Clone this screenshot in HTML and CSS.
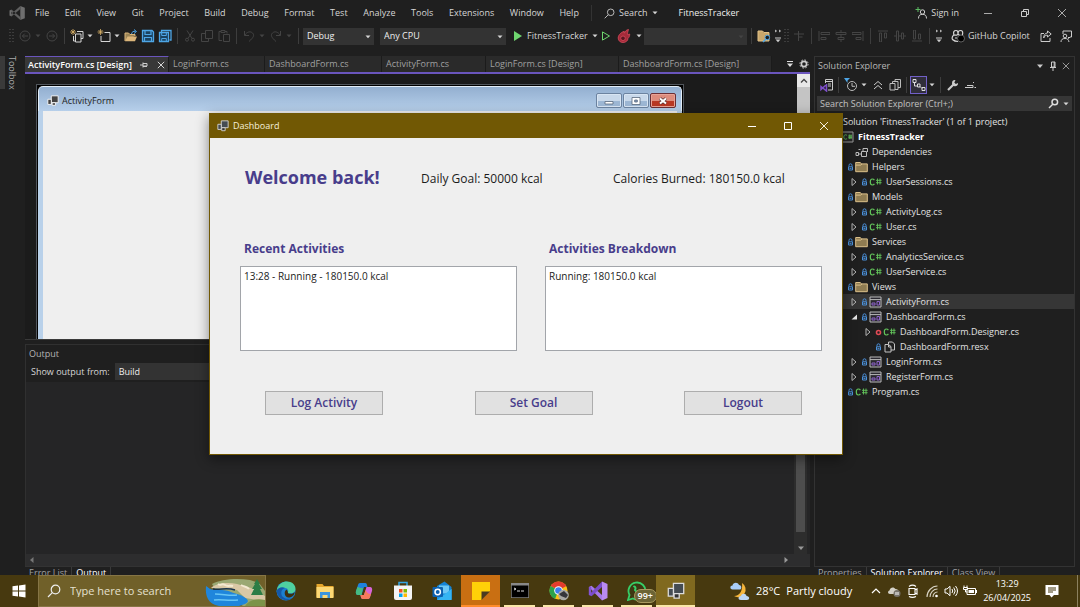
FILE: index.html
```html
<!DOCTYPE html>
<html lang="en">
<head>
<meta charset="utf-8">
<meta name="viewport" content="width=device-width, initial-scale=1">
<title>FitnessTracker</title>
<link rel="stylesheet" href="styles.css">
</head>
<body>
<svg class="defs" aria-hidden="true">
  <symbol id="caret" viewBox="0 0 6 4"><path d="M0.5 0.5h5L3 3.3z" fill="currentColor"/></symbol>
  <symbol id="lock" viewBox="0 0 7 8"><path d="M2 3.500V2.300a1.500 1.500 0 0 1 3 0V3.500M1.500 3.800h4v3.200h-4zM2.500 5.400h2" fill="none" stroke="#4a90d9"/></symbol>
  <symbol id="folder" viewBox="0 0 13 11"><path d="M0.7 2.6V1h4.6l1.2 1.4h5.8v7.8H.7z" fill="#8f7c52" stroke="#dcc08a"/><path d="M.7 3.6h5l1.4-1.2" fill="none" stroke="#dcc08a"/></symbol>
  <symbol id="cs" viewBox="0 0 13 10"><path d="M5.400 3.200C4.800 2.300 4 2 3.300 2 2 2 1.300 3.200 1.300 5s.7 3 2 3C4 8 4.800 7.700 5.400 6.800" fill="none" stroke="#63c55b" stroke-width="1.200"/><path d="M8.500 1.500v6M11 1.500v6M7 3.300h5.600M7 5.700h5.600" stroke="#63c55b" stroke-width=".9" fill="none"/></symbol>
  <symbol id="form" viewBox="0 0 13 12"><path d="M1 1h11v10H1zM1 3.600h11" fill="#2b2930" stroke="#b9b9b9"/><path d="M3 7h3v2H3zM8 5.500h2.500V9H8z" fill="none" stroke="#8c63c7"/></symbol>
  <symbol id="closed" viewBox="0 0 8 10"><path d="M2 1.500v7L6 5z" fill="none" stroke="#b4b4b4"/></symbol>
  <symbol id="open" viewBox="0 0 8 10"><path d="M7 2.500v5H1.500z" fill="#e4e4e4"/></symbol>
  <symbol id="forms" viewBox="0 0 14 14"><path d="M5 1h8v8H5z" fill="#454c52" stroke="#dcdcdc"/><path d="M1 5h4v6H1z" fill="#454c52" stroke="#dcdcdc"/><path d="M5.500 9h4v3.500h-4z" fill="#333" stroke="#dcdcdc"/></symbol>
  <symbol id="x" viewBox="0 0 10 10"><path d="M1 1l8 8M9 1L1 9" fill="none" stroke="currentColor"/></symbol>
  <symbol id="overflow" viewBox="0 0 8 14"><path d="M1 1l1.500 1L1 3M5 1l1.500 1L5 3M1 9h6" fill="none" stroke="currentColor"/><path d="M1.500 10.500h5L4 13.300z" fill="currentColor"/></symbol>
  <symbol id="grip" viewBox="0 0 5 14"><path d="M1 0v14M4 0v14" stroke="#5a5a5a" stroke-dasharray="1 2"/></symbol>
</svg>

<main class="ide">
  <header class="titlebar">
    <svg class="logo" viewBox="0 0 18 16"><path d="M12.300 1L16.800 2.800V13.200L12.300 15z" fill="#6e6e6e"/><path d="M1.500 5.500L3.500 4.500 12.300 12v3zM1.500 10.500L3.500 11.500 12.300 4V1z" fill="#5f5f5f"/><path d="M1.500 5.500h1.800v5H1.500z" fill="#6e6e6e"/></svg>
    <nav class="menu">
      <button>File</button><button>Edit</button><button>View</button><button>Git</button><button>Project</button><button>Build</button><button>Debug</button><button>Format</button><button>Test</button><button>Analyze</button><button>Tools</button><button>Extensions</button><button>Window</button><button>Help</button>
    </nav>
    <button class="title-search"><svg class="i11" viewBox="0 0 11 11"><circle cx="6.700" cy="4.300" r="3.300" fill="none" stroke="#bbb"/><path d="M4.200 6.800L.7 10.300" stroke="#bbb"/></svg>Search<svg class="car"><use href="#caret"/></svg></button>
    <span class="product">FitnessTracker</span>
    <button class="signin"><svg class="i12" viewBox="0 0 12 12"><path d="M3 0v5M.5 2.500h5" stroke="#5dbb63"/><circle cx="7.500" cy="5" r="2.200" fill="none" stroke="#d0d0d0"/><path d="M3.500 11.500c0-3 1.500-4.200 4-4.200s4 1.200 4 4.200" fill="none" stroke="#d0d0d0"/></svg>Sign in</button>
    <div class="caption">
      <button aria-label="Minimize"><svg class="i10" viewBox="0 0 10 10"><path d="M1 5.500h8" stroke="#aaa"/></svg></button>
      <button aria-label="Restore"><svg class="i10" viewBox="0 0 10 10"><path d="M1.500 3.500h5v5h-5zM3.500 3.500v-2h5v5h-2" fill="none" stroke="#ccc"/></svg></button>
      <button aria-label="Close"><svg class="i10 dim"><use href="#x"/></svg></button>
    </div>
  </header>

  <div class="toolbar">
    <span class="cell grip0"><svg class="gripi"><use href="#grip"/></svg></span>
    <button class="cell off" aria-label="Back"><svg class="i12" viewBox="0 0 12 12"><circle cx="6" cy="6" r="5" fill="none" stroke="currentColor"/><path d="M9 6H3.500M5.700 3.700L3.400 6l2.300 2.300" fill="none" stroke="currentColor"/></svg></button>
    <span class="cc off"><svg class="car"><use href="#caret"/></svg></span>
    <button class="cell off" aria-label="Forward"><svg class="i12" viewBox="0 0 12 12"><circle cx="6" cy="6" r="5" fill="none" stroke="currentColor"/><path d="M3 6h5.500M6.300 3.700L8.600 6 6.300 8.300" fill="none" stroke="currentColor"/></svg></button>
    <span class="sep"></span>
    <button class="cell" aria-label="New project"><svg class="i14" viewBox="0 0 14 14"><path d="M3 0v6M0 3h6M1 1l4 4M5 1L1 5" stroke="#d9b167" stroke-width=".8"/><path d="M7 2.500h6v7h-2M3.500 7v5h2M5.500 5h5.500v8H5.500z" fill="none" stroke="#d5d5d5"/></svg></button>
    <span class="cc"><svg class="car"><use href="#caret"/></svg></span>
    <button class="cell" aria-label="New item"><svg class="i14" viewBox="0 0 14 14"><path d="M3.500 0v6M.5 3h6M1.500 1l4 4M5.500 1l-4 4" stroke="#d9b167" stroke-width=".8"/><path d="M7.500 3.500H13v9H4V7" fill="none" stroke="#d5d5d5"/></svg></button>
    <span class="cc"><svg class="car"><use href="#caret"/></svg></span>
    <button class="cell" aria-label="Open"><svg class="i14" viewBox="0 0 14 14"><path d="M1 12V4h3.500L6 5.500h5V7" fill="#9a8456" stroke="#dcb67a"/><path d="M1 12.300L3.500 7.500H13L11 12.300z" fill="#dcb67a"/><path d="M7.500 5C8 2.500 9.500 2 11.500 2.500M10 .5l2.500 2L10 4.500" fill="none" stroke="#4ea6e6"/></svg></button>
    <button class="cell" aria-label="Save"><svg class="i14" viewBox="0 0 14 14"><path d="M1.500 1.500h9.500l1.500 1.500v9.500h-11z" fill="#1b4260" stroke="#4ea6e6" stroke-width="1.300"/><path d="M4 1.500V5.500h6V1.500M3.500 12.500V8.500h7v4" fill="none" stroke="#4ea6e6" stroke-width="1.200"/></svg></button>
    <button class="cell" aria-label="Save all"><svg class="i14" viewBox="0 0 14 14"><path d="M3.500 3V1.500h9.500v9.500h-1.500" fill="none" stroke="#4ea6e6" stroke-width="1.300"/><path d="M1.500 3.500h9v9h-9z" fill="#1b4260" stroke="#4ea6e6" stroke-width="1.300"/><path d="M3.700 3.500v3h4.600v-3M3.700 12.500v-3h4.600v3" fill="none" stroke="#4ea6e6"/></svg></button>
    <span class="sep"></span>
    <button class="cell off" aria-label="Cut"><svg class="i12" viewBox="0 0 12 12"><path d="M3 .5l5 8M9 .5l-5 8" stroke="currentColor"/><circle cx="3" cy="9.700" r="1.500" fill="none" stroke="currentColor"/><circle cx="9" cy="9.700" r="1.500" fill="none" stroke="currentColor"/></svg></button>
    <button class="cell off" aria-label="Copy"><svg class="i12" viewBox="0 0 12 12"><path d="M4.500 .5h7v8h-7zM4.500 3.500h-4v8h7v-3" fill="none" stroke="currentColor"/></svg></button>
    <button class="cell off" aria-label="Paste"><svg class="i12" viewBox="0 0 12 12"><path d="M3 1.500H1v9h3M7 1.500h2v2M3 .5h4v2H3zM5.500 4.500h6v7h-6z" fill="none" stroke="currentColor"/></svg></button>
    <span class="sep"></span>
    <button class="cell off" aria-label="Undo"><svg class="i12" viewBox="0 0 12 12"><path d="M1.500 1v4.500H6M1.700 5.300C4 1.500 7.500 1 9.500 3s1.500 4-3.500 8.500" fill="none" stroke="currentColor"/></svg></button>
    <span class="cc off"><svg class="car"><use href="#caret"/></svg></span>
    <button class="cell off" aria-label="Redo"><svg class="i12" viewBox="0 0 12 12"><path d="M10.500 1v4.500H6M10.300 5.300C8 1.500 4.500 1 2.500 3S1 7 6 11.500" fill="none" stroke="currentColor"/></svg></button>
    <span class="cc off"><svg class="car"><use href="#caret"/></svg></span>
    <span class="sep"></span>
    <span class="combo w-config"><select aria-label="Configuration"><option>Debug</option></select><svg class="car"><use href="#caret"/></svg></span>
    <span class="combo w-platform"><select aria-label="Platform"><option>Any CPU</option></select><svg class="car"><use href="#caret"/></svg></span>
    <button class="run"><svg class="i10" viewBox="0 0 10 10"><path d="M1 0v10l8-5z" fill="#6fd66f"/></svg>FitnessTracker<svg class="car"><use href="#caret"/></svg></button>
    <button class="cell" aria-label="Start without debugging"><svg class="i10" viewBox="0 0 10 10"><path d="M1.500 .9v8.200L8.500 5z" fill="none" stroke="#6fd66f"/></svg></button>
    <button class="cell wide" aria-label="Hot reload"><svg class="i14" viewBox="0 0 14 14"><path d="M11.500.5C9 1 8 2.500 7.300 4.200 6.800 3.500 7 2.800 7.200 2.200 4.500 3.300 1.200 5.500 1.200 9c0 2.700 2 4.500 4.800 4.500S11 11.700 11 9.300c1-.8 1.800-2.300 1.700-4.300l-1.700 1C10.300 4.500 10.800 2.500 11.500.5z" fill="#a52a3a" stroke="#d64b5c" stroke-width=".8"/><circle cx="6" cy="9.300" r="2.300" fill="#5a1620" stroke="#d64b5c" stroke-width=".8"/></svg></button>
    <span class="cc"><svg class="car"><use href="#caret"/></svg></span>
    <span class="combo w-blank off"><select aria-label="Process"><option></option></select><svg class="car"><use href="#caret"/></svg></span>
    <span class="sep"></span>
    <button class="cell" aria-label="Find in files"><svg class="i14" viewBox="0 0 14 14"><path d="M1 12V2h4.500L7 3.500h5V12z" fill="#c9a76b" stroke="#e2c288"/><circle cx="10.300" cy="8.500" r="2.300" fill="#1f1f1f" stroke="#4ea6e6"/><path d="M8.700 10.200L6 13" stroke="#4ea6e6" stroke-width="1.500"/></svg></button>
    <span class="ov"><svg class="ovi"><use href="#overflow"/></svg></span>
    <span class="grip1"><svg class="gripi"><use href="#grip"/></svg></span>
    <button class="cell off" aria-label="Align to grid"><svg class="i12" viewBox="0 0 12 12"><path d="M1 4h10M5.500 1v10M5.500 7h4" stroke="currentColor"/></svg></button>
    <span class="sep"></span>
    <button class="cell off" aria-label="Align lefts"><svg class="i12" viewBox="0 0 12 12"><path d="M1 1v10M3 2.500h9v2H3zM3 7.500h5v2H3z" fill="none" stroke="currentColor"/></svg></button>
    <button class="cell off" aria-label="Align centers"><svg class="i12" viewBox="0 0 12 12"><path d="M6 0v2M6 5v2M6 10v2M1 2.500h10v2H1zM3 7.500h6v2H3z" fill="none" stroke="currentColor"/></svg></button>
    <button class="cell off" aria-label="Align rights"><svg class="i12" viewBox="0 0 12 12"><path d="M11 1v10M0 2.500h9v2H0zM4 7.500h5v2H4z" fill="none" stroke="currentColor"/></svg></button>
    <span class="sep"></span>
    <button class="cell off" aria-label="Align tops"><svg class="i12" viewBox="0 0 12 12"><path d="M1 1h10M2.500 3h2v9h-2zM7.500 3h2v5h-2z" fill="none" stroke="currentColor"/></svg></button>
    <button class="cell off" aria-label="Align middles"><svg class="i12" viewBox="0 0 12 12"><path d="M0 6h2M5 6h2M10 6h2M2.500 1h2v10h-2zM7.500 3h2v6h-2z" fill="none" stroke="currentColor"/></svg></button>
    <button class="cell off" aria-label="Align bottoms"><svg class="i12" viewBox="0 0 12 12"><path d="M1 11h10M2.500 0h2v9h-2zM7.500 4h2v5h-2z" fill="none" stroke="currentColor"/></svg></button>
    <span class="sep"></span>
    <span class="ov"><svg class="ovi"><use href="#overflow"/></svg></span>
    <button class="copilot"><svg class="i14" viewBox="0 0 14 14"><path d="M3 6C2 3 3 1.500 5 1.500S7 3 7 4.500 6 6.500 3 6zM7 4.500C7 3 7.500 1.500 9.500 1.500S12 3 11.500 5.500 7 6 7 4.500zM2.700 6C1 7.500.8 9 1.500 10.500 3 12 5 12.500 7 12.500" fill="none" stroke="#d5d5d5" stroke-width="1.200"/><path d="M5 8v2" stroke="#d5d5d5"/><circle cx="10" cy="9.500" r="3.500" fill="#000" stroke="#999" stroke-width=".6"/></svg>GitHub Copilot</button>
    <button class="cell wide" aria-label="Share"><svg class="i12" viewBox="0 0 12 12"><path d="M4 3.500H1v8h9V8M7.500 1l3.700 3-3.700 3V5.200C5.500 5.200 4.500 6 3.700 8c0-3 1.500-5 3.800-5z" fill="none" stroke="#ccc"/></svg></button>
    <button class="cell wide" aria-label="Feedback"><svg class="i12" viewBox="0 0 12 12"><path d="M3 4V1h8.500v6H10l-1.500 1.500V7" fill="none" stroke="#ccc"/><circle cx="5" cy="6" r="1.800" fill="none" stroke="#ccc"/><path d="M1 12c0-2.500 1.500-3.500 4-3.500s3.500 1 4 3.500" fill="none" stroke="#ccc"/></svg></button>
  </div>

  <div class="workspace">
    <aside class="rail"><button>Toolbox</button></aside>

    <div class="center">
      <section class="editor">
        <div class="tabs">
          <button class="tab active t1">ActivityForm.cs [Design]<svg class="i8" viewBox="0 0 8 8"><path d="M0 4h3M3 1.500v5M3 2.500h4v2.500H3M3 5.500h4" stroke="#ccc" fill="none"/></svg><svg class="i8"><use href="#x"/></svg></button>
          <button class="tab t2">LoginForm.cs</button>
          <button class="tab t3">DashboardForm.cs</button>
          <button class="tab t4">ActivityForm.cs</button>
          <button class="tab t5">LoginForm.cs [Design]</button>
          <button class="tab t6">DashboardForm.cs [Design]</button>
          <span class="tabtools"><svg class="i8" viewBox="0 0 8 8"><path d="M1 1.500h6" stroke="#ddd"/><path d="M1 3.500h6L4 7z" fill="#ddd"/></svg><svg class="i10" viewBox="0 0 10 10"><circle cx="5" cy="5" r="2.600" fill="none" stroke="#ccc" stroke-width="1.600"/><circle cx="5" cy="5" r="4.100" fill="none" stroke="#ccc" stroke-dasharray="1.600 1.620"/></svg></span>
        </div>
        <div class="designer">
          <div class="surface">
            <div class="formwin">
              <div class="formbar"><svg class="i12" viewBox="0 0 14 14"><path d="M5 1h8v8H5z" fill="#444" stroke="#fff"/><path d="M1 5h4v6H1z" fill="#444" stroke="#fff"/><path d="M6 9h4v3H6z" fill="#444" stroke="#fff"/></svg><span>ActivityForm</span>
                <div class="aero"><i><svg class="i12" viewBox="0 0 12 12"><path d="M2 6.500h8v2.500H2z" fill="#fff" stroke="#59687c" stroke-width=".8"/></svg></i><i><svg class="i12" viewBox="0 0 12 12"><path d="M2 2.500h8v7H2z" fill="#fff" stroke="#59687c" stroke-width=".8"/><path d="M4.700 5h2.600v2H4.700z" fill="#8aa2c4" stroke="#59687c" stroke-width=".8"/></svg></i><i class="red"><svg class="i12" viewBox="0 0 12 12"><path d="M3 3.500l6 5M9 3.500l-6 5" stroke="#5c3535" stroke-width="3.500"/><path d="M3 3.500l6 5M9 3.500l-6 5" stroke="#fff" stroke-width="2"/></svg></i></div>
              </div>
              <div class="formbody"></div>
            </div>
          </div>
          <div class="vscroll light"><svg class="i8" viewBox="0 0 8 8"><path d="M1 5.500L4 2.500l3 3" fill="none" stroke="#444" stroke-width="1.300"/></svg></div>
        </div>
      </section>
      <section class="output">
        <h2>Output</h2>
        <div class="outbar"><label for="src">Show output from:</label><span class="combo w-build"><select id="src"><option>Build</option></select></span></div>
        <div class="outtext"><div class="vscroll dark"><span class="thumb"></span><svg class="i8" viewBox="0 0 8 8"><path d="M1 2.500h6L4 6z" fill="#999"/></svg></div></div>
        <div class="hscroll"><svg class="i8" viewBox="0 0 8 8"><path d="M5.500 1v6L2 4z" fill="#777"/></svg><svg class="i8" viewBox="0 0 8 8"><path d="M2.500 1v6L6 4z" fill="#999"/></svg></div>
      </section>
      <div class="dock"><button>Error List</button><button class="on">Output</button></div>
    </div>

    <aside class="side">
      <section class="explorer">
        <div class="exphead"><h2>Solution Explorer</h2><svg class="i8" viewBox="0 0 8 8"><path d="M1 2.500h6L4 6z" fill="#ccc"/></svg><svg class="i10" viewBox="0 0 10 10"><path d="M3.500 1h3.500v5H3.500zM6.200 1v5M2 6.500h6M5 6.500V10" fill="none" stroke="#ccc"/></svg><svg class="i8"><use href="#x"/></svg></div>
        <div class="exptools">
          <button aria-label="Switch views"><svg class="i14" viewBox="0 0 14 14"><path d="M5.500 5V1.500h7V12H8M5.500 3.500h7M8 6h3M8 8h3" fill="none" stroke="#ccc"/><path d="M6.500 6v7L1 8.500v3l5.500-5" fill="none" stroke="#7d4fc9" stroke-width="1.500"/></svg></button>
          <span class="sep"></span>
          <button aria-label="Pending changes"><svg class="i14" viewBox="0 0 14 14"><path d="M0 0h6L3.500 2.500V5z" fill="#4ea6e6"/><circle cx="8" cy="8" r="4.500" fill="none" stroke="#bbb"/><path d="M8 5v3.300h3" fill="none" stroke="#bbb"/></svg></button>
          <span class="cc"><svg class="car"><use href="#caret"/></svg></span>
          <button aria-label="Collapse all"><svg class="i10" viewBox="0 0 10 10"><path d="M1 5l4-3.500L9 5M1 9l4-3.500L9 9" fill="none" stroke="#ccc"/></svg></button>
          <button aria-label="Show all files"><svg class="i14" viewBox="0 0 14 14"><path d="M7 4V1.500h5.500v8H10M4.500 5.500v-2H10v8H7M2 5.500h5v6.500H2z" fill="none" stroke="#bbb"/></svg></button>
          <span class="sep"></span>
          <button class="pressed" aria-label="Track active item"><svg class="i14" viewBox="0 0 14 14"><path d="M1 1.500h3v3H1zM5.500 6h2.500v3H5.500zM10 9.500h3v3h-3zM2.500 4.500V8h3M8 8.500l2 2" fill="none" stroke="#ddd"/></svg></button>
          <span class="cc"><svg class="car"><use href="#caret"/></svg></span>
          <span class="sep"></span>
          <button aria-label="Properties"><svg class="i12" viewBox="0 0 12 12"><path d="M1 11l5-5" stroke="#ccc" stroke-width="2.200"/><path d="M8.500 1.200A3 3 0 1 0 11 4L8.800 5 7.300 3.500z" fill="#ccc"/></svg></button>
          <button aria-label="Preview"><svg class="i12" viewBox="0 0 12 12"><path d="M1 8.500h8v-2H3M10.500 8.500h1.500M9 3l1 1" fill="none" stroke="#ccc"/></svg></button>
        </div>
        <div class="expsearch"><input type="text" placeholder="Search Solution Explorer (Ctrl+;)" aria-label="Search Solution Explorer"><svg class="i11" viewBox="0 0 11 11"><circle cx="6.800" cy="4" r="2.800" fill="none" stroke="#ddd" stroke-width="1.500"/><path d="M5 6L1 10" stroke="#ddd" stroke-width="1.500"/></svg><svg class="car"><use href="#caret"/></svg></div>
        <ul class="tree">
          <li class="root">Solution 'FitnessTracker' (1 of 1 project)</li>
          <li class="l1"><b class="ar"></b><b class="lk"></b><svg class="ic" viewBox="0 0 13 12"><path d="M1 1h11v10H1z" fill="#262626" stroke="#999"/><path d="M6 4.500C4.500 3 2.800 4 2.800 6s1.700 3 3.200 1.500M8.300 3.500v4.500M10 3.500v4.500M7.300 5h3.700M7.300 6.700h3.700" fill="none" stroke="#63c55b" stroke-width=".9"/></svg><strong>FitnessTracker</strong></li>
          <li class="l2"><b class="ar"></b><b class="lk"></b><svg class="ic" viewBox="0 0 13 12"><path d="M1 6.500h2.500v3H1zM3.500 3.500h2M6.500 5.500h5v5h-5zM8 5V2.500h4.500V6M3.500 8h3" fill="none" stroke="#bbb"/></svg>Dependencies</li>
          <li class="l2"><b class="ar"></b><svg class="lk"><use href="#lock"/></svg><svg class="ic"><use href="#folder"/></svg>Helpers</li>
          <li class="l3"><svg class="ar"><use href="#closed"/></svg><svg class="lk"><use href="#lock"/></svg><svg class="ic"><use href="#cs"/></svg>UserSessions.cs</li>
          <li class="l2"><b class="ar"></b><svg class="lk"><use href="#lock"/></svg><svg class="ic"><use href="#folder"/></svg>Models</li>
          <li class="l3"><svg class="ar"><use href="#closed"/></svg><svg class="lk"><use href="#lock"/></svg><svg class="ic"><use href="#cs"/></svg>ActivityLog.cs</li>
          <li class="l3"><svg class="ar"><use href="#closed"/></svg><svg class="lk"><use href="#lock"/></svg><svg class="ic"><use href="#cs"/></svg>User.cs</li>
          <li class="l2"><b class="ar"></b><svg class="lk"><use href="#lock"/></svg><svg class="ic"><use href="#folder"/></svg>Services</li>
          <li class="l3"><svg class="ar"><use href="#closed"/></svg><svg class="lk"><use href="#lock"/></svg><svg class="ic"><use href="#cs"/></svg>AnalyticsService.cs</li>
          <li class="l3"><svg class="ar"><use href="#closed"/></svg><svg class="lk"><use href="#lock"/></svg><svg class="ic"><use href="#cs"/></svg>UserService.cs</li>
          <li class="l2"><b class="ar"></b><svg class="lk"><use href="#lock"/></svg><svg class="ic"><use href="#folder"/></svg>Views</li>
          <li class="l3 selected"><svg class="ar"><use href="#closed"/></svg><svg class="lk"><use href="#lock"/></svg><svg class="ic"><use href="#form"/></svg>ActivityForm.cs</li>
          <li class="l3"><svg class="ar"><use href="#open"/></svg><svg class="lk"><use href="#lock"/></svg><svg class="ic"><use href="#form"/></svg>DashboardForm.cs</li>
          <li class="l4"><svg class="ar"><use href="#closed"/></svg><svg class="lk" viewBox="0 0 7 8"><circle cx="3.500" cy="4.500" r="2" fill="none" stroke="#e04a55" stroke-width="1.600"/></svg><svg class="ic"><use href="#cs"/></svg>DashboardForm.Designer.cs</li>
          <li class="l4"><b class="ar"></b><svg class="lk"><use href="#lock"/></svg><svg class="ic" viewBox="0 0 13 12"><path d="M5.500 3V1h4l2 2v6H8M2 3.500h3.500L8 5.500V11H2zM5.500 3.500V6H8" fill="none" stroke="#c4c4c4"/></svg>DashboardForm.resx</li>
          <li class="l3"><svg class="ar"><use href="#closed"/></svg><svg class="lk"><use href="#lock"/></svg><svg class="ic"><use href="#form"/></svg>LoginForm.cs</li>
          <li class="l3"><svg class="ar"><use href="#closed"/></svg><svg class="lk"><use href="#lock"/></svg><svg class="ic"><use href="#form"/></svg>RegisterForm.cs</li>
          <li class="l2"><b class="ar"></b><svg class="lk"><use href="#lock"/></svg><svg class="ic"><use href="#cs"/></svg>Program.cs</li>
        </ul>
      </section>
      <div class="dock"><button>Properties</button><button class="on">Solution Explorer</button><button>Class View</button></div>
    </aside>
  </div>
</main>

<section class="dash">
  <header class="dashbar"><svg class="i12"><use href="#forms"/></svg><span>Dashboard</span>
    <div class="dashctl">
      <button aria-label="Minimize"><svg class="i10" viewBox="0 0 10 10"><path d="M1 5.500h8" stroke="#fff"/></svg></button>
      <button aria-label="Maximize"><svg class="i10" viewBox="0 0 10 10"><path d="M1.500 1.500h7v7h-7z" fill="none" stroke="#fff"/></svg></button>
      <button aria-label="Close"><svg class="i10"><use href="#x"/></svg></button>
    </div>
  </header>
  <div class="dashbody">
    <div class="summary"><h1>Welcome back!</h1><p>Daily Goal: 50000 kcal</p><p>Calories Burned: 180150.0 kcal</p></div>
    <div class="lists">
      <section><h3>Recent Activities</h3><ul><li>13:28 - Running - 180150.0 kcal</li></ul></section>
      <section><h3>Activities Breakdown</h3><ul><li>Running: 180150.0 kcal</li></ul></section>
    </div>
    <div class="actions"><button>Log Activity</button><button>Set Goal</button><button>Logout</button></div>
  </div>
</section>

<footer class="taskbar">
  <button class="start" aria-label="Start"><svg class="i14" viewBox="0 0 14 14"><path d="M.5 2.300L6 1.500V6.500H.5zM7 1.400L13.500.5v6H7zM.5 7.500H6v5L.5 11.700zM7 7.500h6.500v6L7 12.600z" fill="#fff"/></svg></button>
  <div class="tsearch">
    <svg class="i14" viewBox="0 0 14 14"><circle cx="8.500" cy="5.500" r="4.300" fill="none" stroke="#eee" stroke-width="1.200"/><path d="M5.300 8.700L1 13" stroke="#eee" stroke-width="1.200"/></svg>
    <input type="text" placeholder="Type here to search" aria-label="Type here to search">
    <svg class="scene" viewBox="0 0 60 30"><path d="M7 8C16 3 32 2 45 4l9 3 6 8v15H38L12 16z" fill="#9aa873"/><path d="M6 12c5-5 17-6 26-4l14 4 14 8v5l-20-3-8-8z" fill="#d9c8a6"/><path d="M1 10c2 1 4 4 9 4 8 0 11 0 16 2s9 2 13 5c5 3 5 5 1 7l-6 2H14C3 28 0 20 1 10z" fill="#1f86dc"/><path d="M10 18c8 0 15 2 22 1M9 24c8-1 13 1 24 0" stroke="#68c5f4" stroke-width="1.500" fill="none"/><path d="M8 13c8 1 14-2 22 1" stroke="#17334c" stroke-width="1.500" fill="none"/><path d="M13 8c3 2 4-1 7 1s5 0 8 1M36 9c3 2 6 1 8 4M48 12c2 2 4 3 5 6" stroke="#f3ead2" stroke-width="2" fill="none"/><path d="M52 3l3 5h-1l3 5h-2l3 6H46l3-6h-2l3-5h-1z" fill="#2c7d45"/><path d="M40 30c3-5 10-8 20-6v6z" fill="#7c9449"/></svg>
  </div>
  <div class="apps">
    <button aria-label="Edge"><svg class="i20" viewBox="0 0 20 20"><circle cx="10" cy="10" r="9.500" fill="#1b7fd0"/><path d="M1 8C3 2 8 .5 11 .5c6 0 9 4.500 8.500 8-.5 4-6 4.500-8 3.300 2-1.800 0-5-3.500-5C5 6.800 2 8 .8 11z" fill="#4fd0a0"/><path d="M.5 10C2 6.500 6 5.500 9 7c-4 1-5 6-2 9 2 2 6 2.500 9 1-5 4.500-14 2-15.500-7z" fill="#1458a8"/><path d="M10.500 8.500c2 2 1 3.500 2 4 3 1 5.500-.5 6-1.500.5 3-3 6-6.500 5.500-3.500-.6-4.500-6-1.500-8z" fill="#3d3010"/></svg></button>
    <button aria-label="File Explorer"><svg class="i18" viewBox="0 0 18 18"><path d="M.5 2h6l1.500 2h9.500v11H.5z" fill="#e6a72c"/><path d="M.5 5h17v11H.5z" fill="#fcd874"/><path d="M4 16v-6h10v6h-2.500v-3h-5v3z" fill="#3c95dc"/></svg></button>
    <button aria-label="Copilot"><svg class="i18" viewBox="0 0 18 18"><path d="M5 1h5c2 0 2 2 2.500 4H9L6.500 13H3c-2 0-2.500-2-2-4l2-6c.4-1.300 1-2 2-2z" fill="#1e82de"/><path d="M1 9l1.500-4C5 6 6 6 8 6L6.500 13H3c-2 0-2.500-2-2-4z" fill="#46bb82"/><path d="M13 17H8c-2 0-2-2-2.500-4H9l2.500-8H15c2 0 2.500 2 2 4l-2 6c-.4 1.300-1 2-2 2z" fill="#d764d8"/><path d="M13 17H8c-2 0-2-2-2.500-4H9l1.500-5c2 4 4 4 5.500 4l-1 3c-.4 1.300-1 2-2 2z" fill="#f57a5c"/></svg></button>
    <button aria-label="Store"><svg class="i20" viewBox="0 0 20 20"><path d="M6 5V1.500h8V5" fill="none" stroke="#35a6e5" stroke-width="1.500"/><path d="M1 4.500h18V17q0 2-2 2H3q-2 0-2-2z" fill="#f4f4f4"/><path d="M6 8h3.500v3.500H6z" fill="#f25022"/><path d="M10.500 8H14v3.500h-3.500z" fill="#7fba00"/><path d="M6 12.500h3.500V16H6z" fill="#00a4ef"/><path d="M10.500 12.500H14V16h-3.500z" fill="#ffb900"/></svg></button>
    <button aria-label="Outlook"><svg class="i20" viewBox="0 0 20 20"><path d="M5 5l7.500-4.500L19.500 6v12H5z" fill="#1583d5"/><path d="M7 4.500h10v8H7z" fill="#6cc7f6"/><path d="M5 9l8 5 6.500-6v11H5z" fill="#1b91e4"/><path d="M5 19l14.500-11v11z" fill="#35b5f3"/><rect x=".5" y="6" width="10.500" height="10" rx="1" fill="#0d61b0"/><circle cx="5.700" cy="11" r="2.700" fill="none" stroke="#fff" stroke-width="1.500"/></svg></button>
    <button class="orange" aria-label="Sticky Notes"><svg class="i18" viewBox="0 0 18 18"><path d="M0 0h18v9l-9 9H0z" fill="#ffd108"/><path d="M9.500 9.500H18l-8.500 8.500z" fill="#4a3a20"/></svg></button>
    <button class="run-on" aria-label="Command Prompt"><svg class="i18" viewBox="0 0 18 18"><path d="M0 1h18v15H0z" fill="#888"/><path d="M.7 3.500h16.600v11.800H.7z" fill="#000"/><path d="M3 6l2 1-2 1M6 9h3M10 9h3" stroke="#ddd" fill="none"/></svg></button>
    <button class="run-on" aria-label="Chrome"><svg class="i20" viewBox="0 0 20 20"><circle cx="9.500" cy="9.500" r="9" fill="#fbc116"/><path d="M9.500 9.500L1.700 5A9 9 0 0 1 17.300 5z" fill="#e33b2e"/><path d="M9.500 9.500L6 18A9 9 0 0 1 1.700 5z" fill="#2ca24c"/><circle cx="9.500" cy="9.500" r="4.300" fill="#fff"/><circle cx="9.500" cy="9.500" r="3.300" fill="#3b7ded"/><circle cx="14.500" cy="14" r="5.300" fill="#a9a9a3"/><path d="M10 13l5-3 4 4-2 3-5-2z" fill="#35363a"/></svg></button>
    <button class="run-on" aria-label="Visual Studio"><svg class="i20" viewBox="0 0 20 20"><path d="M14 .5l5.500 2.500v14L14 19.500z" fill="#b98af2"/><path d="M.8 6L3.500 4.800 14 14v5.500z" fill="#a679ea"/><path d="M.8 14L3.500 15.200 14 6V.5z" fill="#7a4cc9"/><path d="M.8 6h2.400v8H.8z" fill="#8354d3"/></svg></button>
    <button class="run-on" aria-label="WhatsApp"><svg class="i20" viewBox="0 0 20 20"><path d="M1 19l1.500-5A8.500 8.500 0 1 1 6 17.500z" fill="#3d3812" stroke="#37cf67" stroke-width="1.800"/><path d="M6.500 6c1-1 2 0 2 1.500L8 9c1 1.500 2 2.500 3.500 3" stroke="#37cf67" stroke-width="2" fill="none"/></svg><span class="badge">99+</span></button>
    <button class="current" aria-label="Dashboard"><svg class="i18"><use href="#forms"/></svg></button>
  </div>
  <button class="weather"><svg class="i20" viewBox="0 0 20 20"><path d="M12 2a7.500 7.500 0 1 1-8 13C10 15 13 9 12 2z" fill="#f6b63c"/><path d="M2.500 8.500C-.5 8-.2 4.500 2.500 4.500 3 1 8 .8 9 4c3 0 3 4.500.5 4.500z" fill="#a9cdf7"/><path d="M11 19c-3.500 0-3-4 0-4 .5-3 5-3 5.500 0 3.500 0 3.500 4 .5 4z" fill="#bcd5f2"/></svg><span>28°C</span><span>Partly cloudy</span></button>
  <div class="tray">
    <svg class="i12" viewBox="0 0 12 12"><path d="M2 8l4-4 4 4" fill="none" stroke="#fff" stroke-width="1.200"/></svg>
    <svg class="i14" viewBox="0 0 14 14"><path d="M3 10C.5 10 .5 7 2.500 6.500 3 3 7 2.500 8.500 5c2 0 3 1 3 3v2z" fill="#d4d1c7"/><circle cx="10" cy="9.500" r="3.500" fill="#77736a"/><path d="M9 8v3M11 8v3" stroke="#fff"/></svg>
    <svg class="i14" viewBox="0 0 14 14"><path d="M3 4.500h6v6H3zM9 6l2-1v5L9 9M3 2.500C5 1 8 1 10 2.500M3 12.500c2 1 5 1 7 0" fill="none" stroke="#fff" stroke-width="1.100"/></svg>
    <svg class="i14" viewBox="0 0 14 14"><path d="M2 13C2 7 7 2 12.500 2M5 13c0-4.500 3.500-8 7.500-8M8 13c0-3 2-5 4.500-5" fill="none" stroke="#d8d3c4" stroke-width="1.100"/><circle cx="11.500" cy="12" r="1.300" fill="#fff"/></svg>
    <svg class="i14" viewBox="0 0 14 14"><path d="M1 5h2l3-2.700v9.400L3 9H1zM8 5q1.500 2 0 4M9.700 3.500q3 3.500 0 7M11.500 2q4 5 0 10" fill="none" stroke="#fff"/></svg>
    <svg class="i14" viewBox="0 0 14 14"><path d="M4 4.500h8.500v6H4zM13.500 6v3" fill="none" stroke="#fff"/><path d="M5.500 6h5.500v3H5.500z" fill="#fff"/><path d="M1 1.500v2M4 1.500v2M.5 3.500h4v2h-4zM2.500 5.500V8h2" fill="none" stroke="#fff"/></svg>
  </div>
  <div class="clock"><time>13:29</time><time>26/04/2025</time></div>
  <button class="notif" aria-label="Notifications"><svg class="i14" viewBox="0 0 14 14"><path d="M.5 1h13v10H9l-2.500 2.500L4.500 11h-4z" fill="#fff"/><path d="M3 4h8M3 6h8M3 8h5" stroke="#47390f"/></svg></button>
</footer>
</body>
</html>
```
FILE: styles.css
```css
* { box-sizing: border-box; }
body {
  margin: 0;
  height: 100vh;
  display: flex;
  flex-direction: column;
  overflow: hidden;
  background: #1f1f1f;
  color: #d6d6d6;
  font: 9px/12px "Open Sans", "Noto Sans", sans-serif;
}
button, input, select {
  font: inherit;
  color: inherit;
  background: none;
  border: 0;
  padding: 0;
  margin: 0;
  white-space: nowrap;
}
h1, h2, h3, p, ul { margin: 0; padding: 0; font: inherit; list-style: none; }
svg { flex: none; display: block; }
.defs { position: absolute; width: 0; height: 0; }
.i8 { width: 8px; height: 8px; }
.i10 { width: 10px; height: 10px; }
.i11 { width: 11px; height: 11px; }
.i12 { width: 12px; height: 12px; }
.i14 { width: 14px; height: 14px; }
.i18 { width: 18px; height: 18px; }
.i20 { width: 20px; height: 20px; }
.car { width: 6px; height: 4px; }
.dim { color: #aaa; }

.ide { flex: 1; min-height: 0; display: flex; flex-direction: column; overflow: hidden; }

/* title bar */
.titlebar { display: flex; align-items: center; height: 26px; padding-left: 8px; flex: none; }
.logo { width: 18px; height: 16px; }
.menu { display: flex; justify-content: space-between; width: 544px; margin-left: 9px; }
.title-search { display: flex; align-items: center; gap: 4px; margin-left: 12px; padding-left: 12px; border-left: 1px solid #333; height: 16px; }
.product { margin-left: 21px; color: #eee; }
.signin { display: flex; align-items: center; gap: 4px; margin-left: auto; }
.caption { display: flex; margin-left: 10px; }
.caption button { width: 37px; height: 26px; display: grid; place-items: center; }

/* toolbar */
.toolbar { display: flex; align-items: center; height: 20px; flex: none; padding-right: 4px; }
.cell { width: 17px; height: 18px; display: grid; place-items: center; flex: none; }
.cell.wide { width: 20px; }
.grip0 { width: 16px; padding-left: 6px; }
.grip1 { width: 6px; }
.gripi { width: 5px; height: 14px; }
.cc { width: 10px; display: grid; place-items: center; flex: none; }
.off { color: #444; }
.sep { width: 8px; height: 16px; flex: none; display: grid; justify-content: center; }
.sep::before { content: ""; width: 1px; background: #3d3d3d; }
.ov { width: 12px; display: grid; place-items: center; flex: none; color: #ccc; }
.ovi { width: 8px; height: 14px; }
.combo { position: relative; height: 17px; background: #333; flex: none; display: block; }
.combo select { appearance: none; width: 100%; height: 100%; padding: 0 4px; color: #eee; }
.combo .car { position: absolute; right: 3px; top: 7px; }
.w-config { width: 71px; margin: 0 6px 0 1px; }
.w-platform { width: 126px; }
.w-blank { width: 103px; margin: 0; }
.w-build { width: 120px; }
.run { display: flex; align-items: center; gap: 4px; padding: 0 2px 0 7px; width: 91px; }
.run .car { margin-left: auto; }
.copilot { display: flex; align-items: center; gap: 3px; margin: 0 auto 0 6px; }

/* workspace */
.workspace { flex: 1; min-height: 0; display: flex; padding-top: 10px; }
.rail { width: 25px; flex: none; }
.rail button { writing-mode: vertical-rl; border-left: 5px solid #3a3a3a; height: 33px; width: 20px; line-height: 15px; color: #aaa; text-align: left; }
.center { flex: 1; min-width: 0; display: flex; flex-direction: column; }
.editor { height: 284px; flex: none; display: flex; flex-direction: column; border-bottom: 1px solid #3a3a3a; }
.tabs { display: flex; height: 18px; border-bottom: 2px solid #6a55bd; flex: none; }
.tab { background: #2a2a2a; color: #a0a0a0; text-align: left; padding: 0 4px 1px; border-right: 1px solid #1b1b1b; }
.tab.active { background: #383838; color: #fff; font-weight: 600; border-top: 1px solid #6a55bd; display: flex; align-items: center; gap: 6px; padding: 0 3px; justify-content: space-between; }
.t1 { width: 144px; }
.t2 { width: 96px; }
.t3 { width: 117px; }
.t4 { width: 104px; }
.t5 { width: 133px; }
.t6 { width: 153px; }
.tabtools { display: flex; align-items: center; gap: 5px; margin-left: auto; padding-right: 1px; }
.designer { flex: 1; min-height: 0; display: flex; background: #1b1b1b; }
.surface { flex: 1; padding: 10px 113px 0 11px; overflow: hidden; }
.formwin { height: 100%; width: 100%; max-width: 648px; border: 1px solid #51565c; border-bottom: 0; padding: 1px 1px 0; display: flex; flex-direction: column; background: #000; }
.formbar { height: 25px; flex: none; display: flex; align-items: center; gap: 3px; padding: 3px 5px 0 8px; background: linear-gradient(#93afd0, #b6cfea); border: 1px solid #e4eef8; border-bottom: 0; border-radius: 5px 5px 0 0; color: #222; }
.aero { display: flex; gap: 1px; margin-left: auto; }
.aero i { width: 26px; height: 15px; display: grid; place-items: center; border: 1px solid #6c83a0; border-radius: 2px; box-shadow: inset 0 0 0 1px #d8e5f3; background: linear-gradient(#c8d8ea 50%, #9db7d4 50%); }
.aero .red { border-color: #6b2f35; box-shadow: inset 0 0 0 1px #e8a295; background: linear-gradient(#dd8c7d 50%, #b93824 50%); }
.formbody { flex: 1; background: #efefef; border: solid #b9d1ea; border-width: 0 5px; }
.vscroll { width: 13px; display: flex; flex-direction: column; align-items: center; flex: none; }
.light { background: linear-gradient(#e8e8e8 13px, #c4c4c4 13px); padding-top: 3px; }

/* output pane */
.output { flex: 1; min-height: 0; margin-top: 4px; border: 1px solid #303030; border-width: 1px 0 0 1px; display: flex; flex-direction: column; }
.output h2 { padding: 3px 3px 2px; color: #b4b4b4; }
.outbar { display: flex; align-items: center; gap: 5px; padding: 1px 5px 2px; }
.outtext { flex: 1; background: #252526; display: flex; justify-content: flex-end; min-height: 0; padding-right: 3px; }
.dark { background: #2d2d2d; justify-content: space-between; padding-bottom: 2px; }
.thumb { width: 9px; flex: 1; background: #4d4d4d; margin-bottom: 12px; }
.hscroll { height: 12px; flex: none; background: #2d2d2e; display: flex; align-items: center; justify-content: space-between; padding: 0 20px 0 2px; }
.dock { height: 9px; flex: none; display: flex; overflow: hidden; border-top: 1px solid #333; color: #a0a0a0; }
.dock button { align-self: flex-start; padding: 0 4px; height: 12px; line-height: 12px; border-right: 1px solid #3a3a3a; }
.dock .on { color: #fff; }

/* solution explorer */
.side { width: 270px; flex: none; padding: 0 5px 0 4px; display: flex; flex-direction: column; }
.explorer { flex: 1; min-height: 0; border: 1px solid #333; border-bottom: 0; }
.exphead { height: 18px; display: flex; align-items: center; gap: 4px; padding: 0 4px 0 3px; color: #b8b8b8; }
.exphead h2 { margin-right: auto; }
.exptools { display: flex; align-items: center; height: 20px; padding-left: 3px; }
.exptools button { width: 17px; height: 18px; display: grid; place-items: center; }
.exptools .pressed { border: 1px solid #7160c8; background: #302e3a; }
.exptools .sep { width: 7px; }
.expsearch { height: 15px; display: flex; align-items: center; gap: 4px; background: #363636; margin: 1px 2px 3px; padding: 0 3px; }
.expsearch input { flex: 1; min-width: 0; }
input::placeholder { color: #c2c2c2; opacity: 1; }
.expsearch input, .tsearch input { outline: 0; }
.tree li { height: 15px; display: flex; align-items: center; white-space: nowrap; color: #e2e2e2; }
.ar { width: 8px; height: 10px; margin: 0 2px 0 0; }
.lk { width: 7px; height: 8px; margin: 0 1px; }
.ic { width: 13px; height: 12px; margin-right: 4px; }
.tree strong { font-weight: 700; color: #fff; }
.root { padding-left: 28px; }
.l1 { padding-left: 7px; }
.l2 { padding-left: 21px; }
.l3 { padding-left: 35px; }
.l4 { padding-left: 49px; }
.tree .selected { background: #363636; }

/* dashboard window, floating above the IDE */
.dash { position: absolute; left: 209px; top: 113px; width: 634px; background: #efefef; border: 1px solid #715804; box-shadow: 0 4px 12px rgba(0, 0, 0, .45); color: #1c1c1c; }
.dashbar { height: 24px; display: flex; align-items: center; gap: 4px; padding-left: 7px; background: #715804; color: #f6f0dc; font-size: 9px; }
.dashctl { display: flex; margin-left: auto; }
.dashctl button { width: 36px; height: 24px; display: grid; place-items: center; }
.dashbody { padding: 23px 20px 39px 30px; }
.summary { display: grid; grid-template-columns: 176px 192px 1fr; align-items: center; padding-left: 5px; font-size: 12px; line-height: 28px; }
.summary h1 { font-size: 18px; font-weight: 700; color: #483d8b; }
.summary p { padding-top: 4px; }
.lists { display: grid; grid-template-columns: 1fr 1fr; gap: 28px; margin-top: 48px; }
.lists h3 { font-size: 12px; line-height: 16px; font-weight: 700; color: #483d8b; padding: 0 4px; margin-bottom: 9px; }
.lists ul { height: 85px; background: #fff; border: 1px solid #a2a5aa; padding: 2px 3px; font-size: 10px; line-height: 14px; }
.actions { display: flex; justify-content: space-between; margin-top: 40px; padding: 0 20px 0 25px; }
.actions button { width: 118px; height: 24px; background: #e1e1e1; border: 1px solid #adadad; color: #483d8b; font-size: 12px; font-weight: 600; }

/* taskbar */
.taskbar { position: relative; height: 32px; flex: none; display: flex; background: #47390f; color: #fff; }
.start { width: 38px; display: grid; place-items: center; flex: none; }
.tsearch { width: 228px; flex: none; display: flex; align-items: center; background: #706029; border: 1px solid #867545; padding-left: 8px; }
.tsearch input { flex: 1; min-width: 0; padding-left: 9px; font-size: 11px; }
.tsearch input::placeholder { color: #e5e0cf; }
.scene { width: 60px; height: 30px; }
.apps { display: flex; flex: none; }
.apps button { position: relative; width: 39px; display: grid; place-items: center; border-bottom: 2px solid transparent; border-top: 2px solid transparent; }
.apps .run-on::after { content: ""; position: absolute; left: 4px; right: 4px; bottom: -2px; height: 2px; background: #f9e7a9; }
.apps .orange { background: #c96f12; border-color: #c96f12; border-bottom-color: #ff8c2b; }
.apps .current { background: #80691f; border-top-color: #80691f; border-bottom-color: #f9e7a9; }
.badge { position: absolute; right: -1px; top: 12px; padding: 0 3px; border: 1px solid #a99a60; border-radius: 7px; background: #6c6435; font-size: 9px; line-height: 12px; font-weight: 600; }
.weather { display: flex; align-items: center; gap: 6px; margin-left: auto; font-size: 11px; }
.tray { display: flex; align-items: center; gap: 5px; margin-left: 18px; }
.clock { display: flex; flex-direction: column; justify-content: center; align-items: center; margin-left: 6px; font-size: 9px; line-height: 14px; }
.notif { width: 47px; display: grid; place-items: center; border-right: 1px solid #8c815f; margin-right: 2px; padding-right: 4px; }
```
